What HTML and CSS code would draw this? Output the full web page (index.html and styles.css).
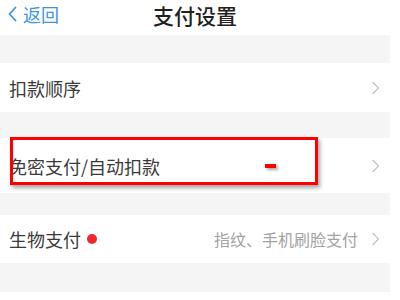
FILE: index.html
```html
<!DOCTYPE html>
<html lang="zh-CN">
<head>
<meta charset="utf-8">
<title>支付设置</title>
<link rel="stylesheet" href="styles.css">
</head>
<body>
<div class="page">
  <header class="nav">
    <a class="back">
      <svg class="back-icon" width="9" height="16" viewBox="0 0 9 16"><polyline points="7.5,1.5 1.5,8 7.5,14.5" fill="none" stroke="#3d93e6" stroke-width="1.8" stroke-linecap="round" stroke-linejoin="round"/></svg>
      <span>返回</span>
    </a>
    <h1 class="title">支付设置</h1>
    <span></span>
  </header>
  <div class="gap gap-a"></div>
  <div class="row row-a">
    <span class="label">扣款顺序</span>
    <span class="right">
      <svg class="chev" width="9" height="14" viewBox="0 0 9 14"><polyline points="1.5,1 7.5,7 1.5,13" fill="none" stroke="#c4c4c4" stroke-width="1.3"/></svg>
    </span>
  </div>
  <div class="gap gap-b"></div>
  <div class="row row-b">
    <span class="label">免密支付/自动扣款</span>
    <span class="right">
      <svg class="chev" width="9" height="14" viewBox="0 0 9 14"><polyline points="1.5,1 7.5,7 1.5,13" fill="none" stroke="#c4c4c4" stroke-width="1.3"/></svg>
    </span>
    <div class="mark-box"></div>
    <div class="mark-dash"></div>
  </div>
  <div class="gap gap-c"></div>
  <div class="row row-c">
    <span class="label">生物支付<i class="dot"></i></span>
    <span class="right">
      <span class="value">指纹、手机刷脸支付</span>
      <svg class="chev" width="9" height="14" viewBox="0 0 9 14"><polyline points="1.5,1 7.5,7 1.5,13" fill="none" stroke="#c4c4c4" stroke-width="1.3"/></svg>
    </span>
  </div>
  <div class="gap gap-d"></div>
</div>
</body>
</html>
```
FILE: styles.css
```css
html, body {
  margin: 0;
  padding: 0;
  background: #ffffff;
}
body {
  font-family: "Noto Sans CJK SC", "Noto Sans", sans-serif;
}
.page {
  width: 390px;
  background: #ffffff;
}
.nav {
  height: 35px;
  box-sizing: border-box;
  padding-bottom: 5px;
  display: grid;
  grid-template-columns: 1fr auto 1fr;
  align-items: center;
}
.back {
  display: flex;
  align-items: center;
  gap: 6px;
  padding-left: 8px;
  padding-bottom: 2px;
  color: #3d93e6;
  font-size: 18px;
  line-height: 26px;
}
.back-icon {
  display: block;
}
.title {
  margin: 0;
  font-size: 21px;
  font-weight: 500;
  color: #1f1f1f;
  line-height: 30px;
}
.gap {
  background: #f5f5f5;
}
.gap-a { height: 28px; }
.gap-b { height: 26px; }
.gap-c { height: 22px; }
.gap-d { height: 29px; }
.row {
  position: relative;
  display: flex;
  align-items: center;
  justify-content: space-between;
  padding: 0 10px 0 9px;
  background: #ffffff;
}
.row-a { height: 49px; }
.row-b { height: 55px; }
.row-c { height: 48px; }
.label {
  display: flex;
  align-items: center;
  font-size: 18px;
  color: #3a3a3a;
  line-height: 26px;
}
.right {
  display: flex;
  align-items: center;
  gap: 13px;
}
.value {
  font-size: 16px;
  color: #a3a3a3;
  line-height: 24px;
}
.chev {
  display: block;
}
.dot {
  display: inline-block;
  width: 10px;
  height: 10px;
  border-radius: 50%;
  background: #f0282d;
  margin-left: 6px;
}
.mark-box {
  position: absolute;
  left: 10px;
  top: -1px;
  width: 308px;
  height: 48px;
  box-sizing: border-box;
  border: 3px solid #ff0000;
  box-shadow: 2px 3px 4px rgba(0, 0, 0, 0.35);
}
.mark-dash {
  position: absolute;
  left: 265px;
  top: 26px;
  width: 11px;
  height: 4px;
  background: #ff0000;
  box-shadow: 2px 2px 3px rgba(0, 0, 0, 0.35);
}
```
